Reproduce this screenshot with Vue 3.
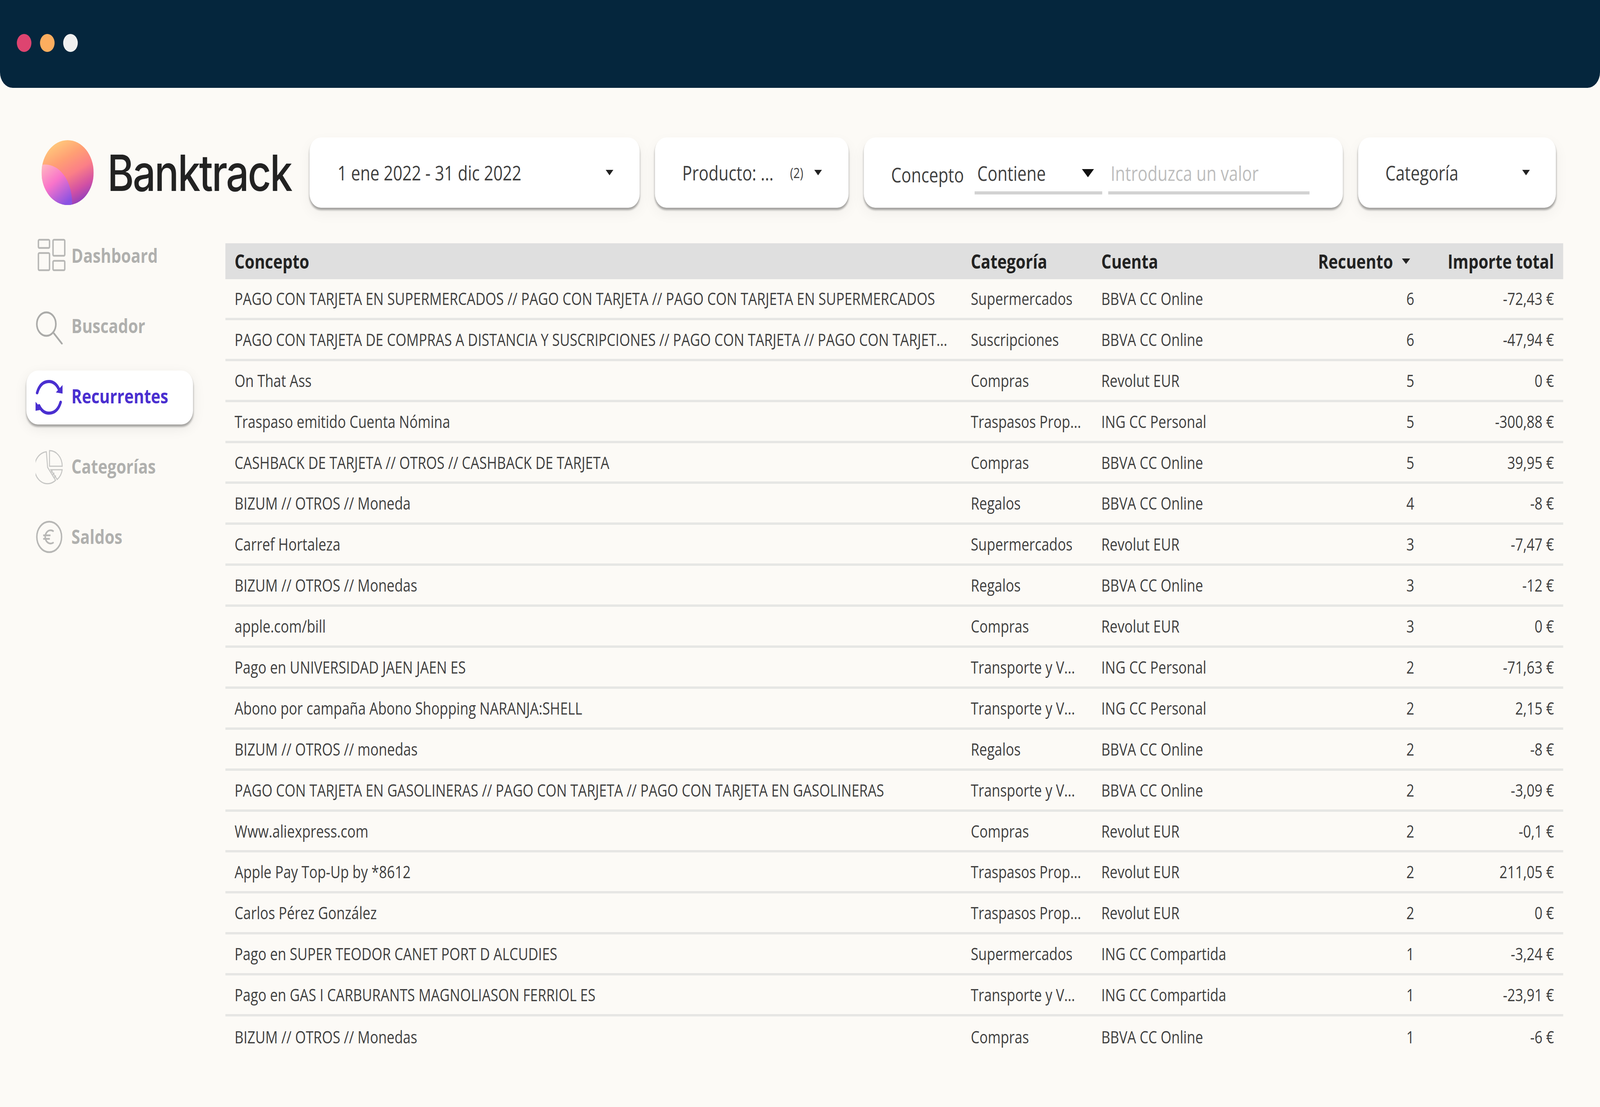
<template>
  <div class="stage">
    <div class="page" :style="{ transform: fitWidth }">
      <div class="topbar">
        <span class="dot red"></span>
        <span class="dot orange"></span>
        <span class="dot white"></span>
      </div>

      <div class="toolbar">
        <div class="brand">
          <svg class="logo" viewBox="0 0 164 166">
            <defs>
              <linearGradient id="orb" x1="0.25" y1="0.02" x2="0.72" y2="0.98">
                <stop offset="0" stop-color="#ffcb7c" />
                <stop offset="0.3" stop-color="#ff9f74" />
                <stop offset="0.55" stop-color="#fb7f87" />
                <stop offset="0.8" stop-color="#d250a4" />
                <stop offset="1" stop-color="#8e3fbe" />
              </linearGradient>
              <linearGradient id="lobe" x1="0.1" y1="0" x2="0.75" y2="1">
                <stop offset="0" stop-color="#ffb3c0" />
                <stop offset="0.45" stop-color="#f974ca" />
                <stop offset="1" stop-color="#8a52e2" />
              </linearGradient>
              <clipPath id="orbClip"><ellipse cx="82" cy="83" rx="82" ry="83" /></clipPath>
            </defs>
            <ellipse cx="82" cy="83" rx="82" ry="83" fill="url(#orb)" />
            <path clip-path="url(#orbClip)" fill="url(#lobe)" d="M0 63 C52 56 98 100 96 166 L0 166 Z" />
          </svg>
          <span class="wordmark">Banktrack</span>
        </div>
        <div class="filters">
          <div class="card date">
            <span>1 ene 2022 - 31 dic 2022</span>
            <i class="caret"></i>
          </div>
          <div class="card product">
            <span>Producto: ...</span>
            <small>(2)</small>
            <i class="caret"></i>
          </div>
          <div class="card concept">
            <span class="concept-label">Concepto</span>
            <div class="select">
              <span>Contiene</span>
              <i class="caret big"></i>
            </div>
            <div class="value">Introduzca un valor</div>
          </div>
          <div class="card category">
            <span>Categoría</span>
            <i class="caret"></i>
          </div>
        </div>
      </div>

      <div class="body">
        <nav class="sidebar">
          <a class="nav-item">
            <svg viewBox="0 0 96 96" fill="none" stroke="#b7b7b5" stroke-width="4.5">
              <rect x="9" y="8" width="35" height="21" rx="3" />
              <rect x="55" y="8" width="37" height="41" rx="3" />
              <rect x="9" y="42" width="35" height="44" rx="3" />
              <rect x="55" y="62" width="37" height="24" rx="3" />
            </svg>
            Dashboard
          </a>
          <a class="nav-item">
            <svg viewBox="0 0 96 96" fill="none" stroke="#ababa9" stroke-width="5">
              <circle cx="34" cy="44" r="30" />
              <path d="M58 68 L83 94" stroke-linecap="round" />
            </svg>
            Buscador
          </a>
          <a class="nav-item active">
            <svg viewBox="0 0 96 96" fill="none" stroke="#4a2fd0" stroke-width="8" stroke-linecap="round">
              <path d="M5 40 Q15 11 42 11 Q62 11 73 30" />
              <path d="M79 64 Q69 92 42 92 Q22 92 11 73" />
              <path d="M85 20 V42 L64 39 Z M0 63 V86 L21 83 Z" fill="#4a2fd0" stroke="none" />
            </svg>
            Recurrentes
          </a>
          <a class="nav-item">
            <svg viewBox="0 0 96 96" fill="none" stroke="#c6c6c4" stroke-width="3">
              <path d="M34 11 A41 41 0 1 0 63 84 L38 51 Z" />
              <path d="M44 8 A40 40 0 0 1 84 48 L44 48 Z" />
              <path d="M84 57 A40 40 0 0 1 68 82 L48 57 Z" />
              <path d="M53 58 L49 64 M59 65 L54 70 M64 72 L59 77" />
            </svg>
            Categorías
          </a>
          <a class="nav-item">
            <svg viewBox="0 0 96 96" fill="none" stroke="#b7b7b5" stroke-width="4.5">
              <circle cx="43" cy="49" r="39" />
              <path d="M57 35 A17 17 0 1 0 57 63 M24 45 H47 M24 54 H45" />
            </svg>
            Saldos
          </a>
        </nav>

        <div class="table">
          <div class="row head">
            <div>Concepto</div>
            <div>Categoría</div>
            <div>Cuenta</div>
            <div class="num sort">Recuento<i class="caret"></i></div>
            <div class="num">Importe total</div>
          </div>
          <div v-for="(r, i) in rows" :key="i" class="row">
            <div>{{ r[0] }}</div>
            <div>{{ r[1] }}</div>
            <div>{{ r[2] }}</div>
            <div class="num">{{ r[3] }}</div>
            <div class="num">{{ r[4] }}</div>
          </div>
        </div>
      </div>
    </div>
  </div>
</template>

<script setup>
// the layout is drawn on a 5040 wide sheet, squeezed if the window is narrower
const fitWidth = `scaleX(${Math.min(window.innerWidth / 5040, 1)})`

const rows = [
  ['PAGO CON TARJETA EN SUPERMERCADOS // PAGO CON TARJETA // PAGO CON TARJETA EN SUPERMERCADOS', 'Supermercados', 'BBVA CC Online', 6, '-72,43 €'],
  ['PAGO CON TARJETA DE COMPRAS A DISTANCIA Y SUSCRIPCIONES // PAGO CON TARJETA // PAGO CON TARJET...', 'Suscripciones', 'BBVA CC Online', 6, '-47,94 €'],
  ['On That Ass', 'Compras', 'Revolut EUR', 5, '0 €'],
  ['Traspaso emitido Cuenta Nómina', 'Traspasos Prop...', 'ING CC Personal', 5, '-300,88 €'],
  ['CASHBACK DE TARJETA // OTROS // CASHBACK DE TARJETA', 'Compras', 'BBVA CC Online', 5, '39,95 €'],
  ['BIZUM // OTROS // Moneda', 'Regalos', 'BBVA CC Online', 4, '-8 €'],
  ['Carref Hortaleza', 'Supermercados', 'Revolut EUR', 3, '-7,47 €'],
  ['BIZUM // OTROS // Monedas', 'Regalos', 'BBVA CC Online', 3, '-12 €'],
  ['apple.com/bill', 'Compras', 'Revolut EUR', 3, '0 €'],
  ['Pago en UNIVERSIDAD JAEN JAEN ES', 'Transporte y V...', 'ING CC Personal', 2, '-71,63 €'],
  ['Abono por campaña Abono Shopping NARANJA:SHELL', 'Transporte y V...', 'ING CC Personal', 2, '2,15 €'],
  ['BIZUM // OTROS // monedas', 'Regalos', 'BBVA CC Online', 2, '-8 €'],
  ['PAGO CON TARJETA EN GASOLINERAS // PAGO CON TARJETA // PAGO CON TARJETA EN GASOLINERAS', 'Transporte y V...', 'BBVA CC Online', 2, '-3,09 €'],
  ['Www.aliexpress.com', 'Compras', 'Revolut EUR', 2, '-0,1 €'],
  ['Apple Pay Top-Up by *8612', 'Traspasos Prop...', 'Revolut EUR', 2, '211,05 €'],
  ['Carlos Pérez González', 'Traspasos Prop...', 'Revolut EUR', 2, '0 €'],
  ['Pago en SUPER TEODOR CANET PORT D ALCUDIES', 'Supermercados', 'ING CC Compartida', 1, '-3,24 €'],
  ['Pago en GAS I CARBURANTS MAGNOLIASON FERRIOL ES', 'Transporte y V...', 'ING CC Compartida', 1, '-23,91 €'],
  ['BIZUM // OTROS // Monedas', 'Compras', 'BBVA CC Online', 1, '-6 €']
]
</script>

<style>
html, body {
  overflow: hidden;
}
</style>

<style scoped>
.stage {
  width: 100vw;
  height: 2835px;
  overflow: hidden;
  background: #fcfaf6;
}

.page {
  width: 5040px;
  height: 2835px;
  transform-origin: 0 0;
  font-family: "Open Sans", sans-serif;
  color: #3f3f3f;
}

.topbar {
  height: 225px;
  box-sizing: border-box;
  padding: 0 0 6px 53px;
  background: #05263d;
  border-radius: 0 0 40px 40px;
  display: flex;
  align-items: center;
  gap: 27px;
}

.dot {
  width: 46px;
  height: 46px;
  border-radius: 50%;
}
.red { background: #de4470; }
.orange { background: #fdae5f; }
.white { background: #f0f0f0; }

.toolbar {
  display: flex;
  align-items: center;
  margin-top: 127px;
  padding-left: 131px;
}

.brand {
  width: 844px;
  display: flex;
  align-items: center;
  gap: 43px;
}

.logo {
  width: 164px;
  height: 166px;
  flex: none;
}

.wordmark {
  font-family: Inter, sans-serif;
  font-weight: 500;
  font-size: 128px;
  letter-spacing: -4px;
  color: #222;
}

.filters {
  display: flex;
  gap: 48px;
}

.card {
  height: 180px;
  box-sizing: border-box;
  background: #fff;
  border-radius: 36px;
  box-shadow: 0 6px 5px rgba(0, 0, 0, 0.32), 0 14px 40px rgba(0, 0, 0, 0.05);
  display: flex;
  align-items: center;
  font-size: 51.5px;
  white-space: nowrap;
}

.caret {
  display: block;
  flex: none;
  width: 0;
  height: 0;
  border-left: 12px solid transparent;
  border-right: 12px solid transparent;
  border-top: 14px solid #222;
}
.caret.big {
  border-left-width: 19px;
  border-right-width: 19px;
  border-top-width: 21px;
  border-top-color: #111;
}

.date {
  width: 1040px;
  padding: 0 83px 0 88px;
  justify-content: space-between;
}

.product {
  width: 610px;
  padding: 0 84px 0 86px;
}
.product small {
  margin-left: 52px;
  font-size: 36px;
}
.product .caret {
  margin-left: auto;
}

.concept {
  width: 1509px;
  padding-left: 86px;
}
.concept-label {
  margin-top: 10px;
}

.select {
  width: 402px;
  height: 112px;
  box-sizing: border-box;
  margin-left: 34px;
  padding: 10px 26px 0 8px;
  border-bottom: 8px solid #d2d2d2;
  display: flex;
  align-items: center;
  justify-content: space-between;
}

.value {
  width: 634px;
  height: 112px;
  box-sizing: border-box;
  margin-left: 19px;
  padding: 10px 0 0 7px;
  border-bottom: 8px solid #d2d2d2;
  display: flex;
  align-items: center;
  color: #bdbdbd;
}

.category {
  width: 623px;
  padding: 0 82px 0 86px;
  justify-content: space-between;
}

.body {
  display: flex;
  align-items: flex-start;
  margin-top: 57px;
}

.sidebar {
  width: 710px;
  flex: none;
  box-sizing: border-box;
  padding-left: 83px;
  display: flex;
  flex-direction: column;
  gap: 42px;
}

.nav-item {
  width: 525px;
  height: 138px;
  box-sizing: border-box;
  padding: 0 0 8px 29px;
  border-radius: 36px;
  display: flex;
  align-items: center;
  gap: 17px;
  font-size: 50px;
  font-weight: 700;
  color: #b0b0ae;
}
.nav-item svg {
  width: 96px;
  height: 96px;
  flex: none;
}
.nav-item.active {
  background: #fff;
  color: #4a2fd0;
  box-shadow: 0 6px 5px rgba(0, 0, 0, 0.3), 0 10px 36px rgba(0, 0, 0, 0.08);
}

.table {
  width: 4214px;
  margin-top: 34px;
}

.row {
  display: grid;
  grid-template-columns: 2319px 411px 631px 355px 440px;
  height: 104.9px;
  box-sizing: border-box;
  padding: 0 29px;
  align-items: center;
  font-size: 43.5px;
  white-space: nowrap;
  border-bottom: 6px solid #e6e6e4;
}
.row:last-child {
  border-bottom: none;
}

.head {
  height: 92px;
  background: #dfdfdf;
  border-bottom: none;
  font-size: 50px;
  font-weight: 700;
  color: #222;
}

.num {
  text-align: right;
}

.sort {
  display: flex;
  align-items: center;
  justify-content: flex-end;
  gap: 28px;
  padding-right: 13px;
}
.sort .caret {
  border-left-width: 13px;
  border-right-width: 13px;
}
</style>
